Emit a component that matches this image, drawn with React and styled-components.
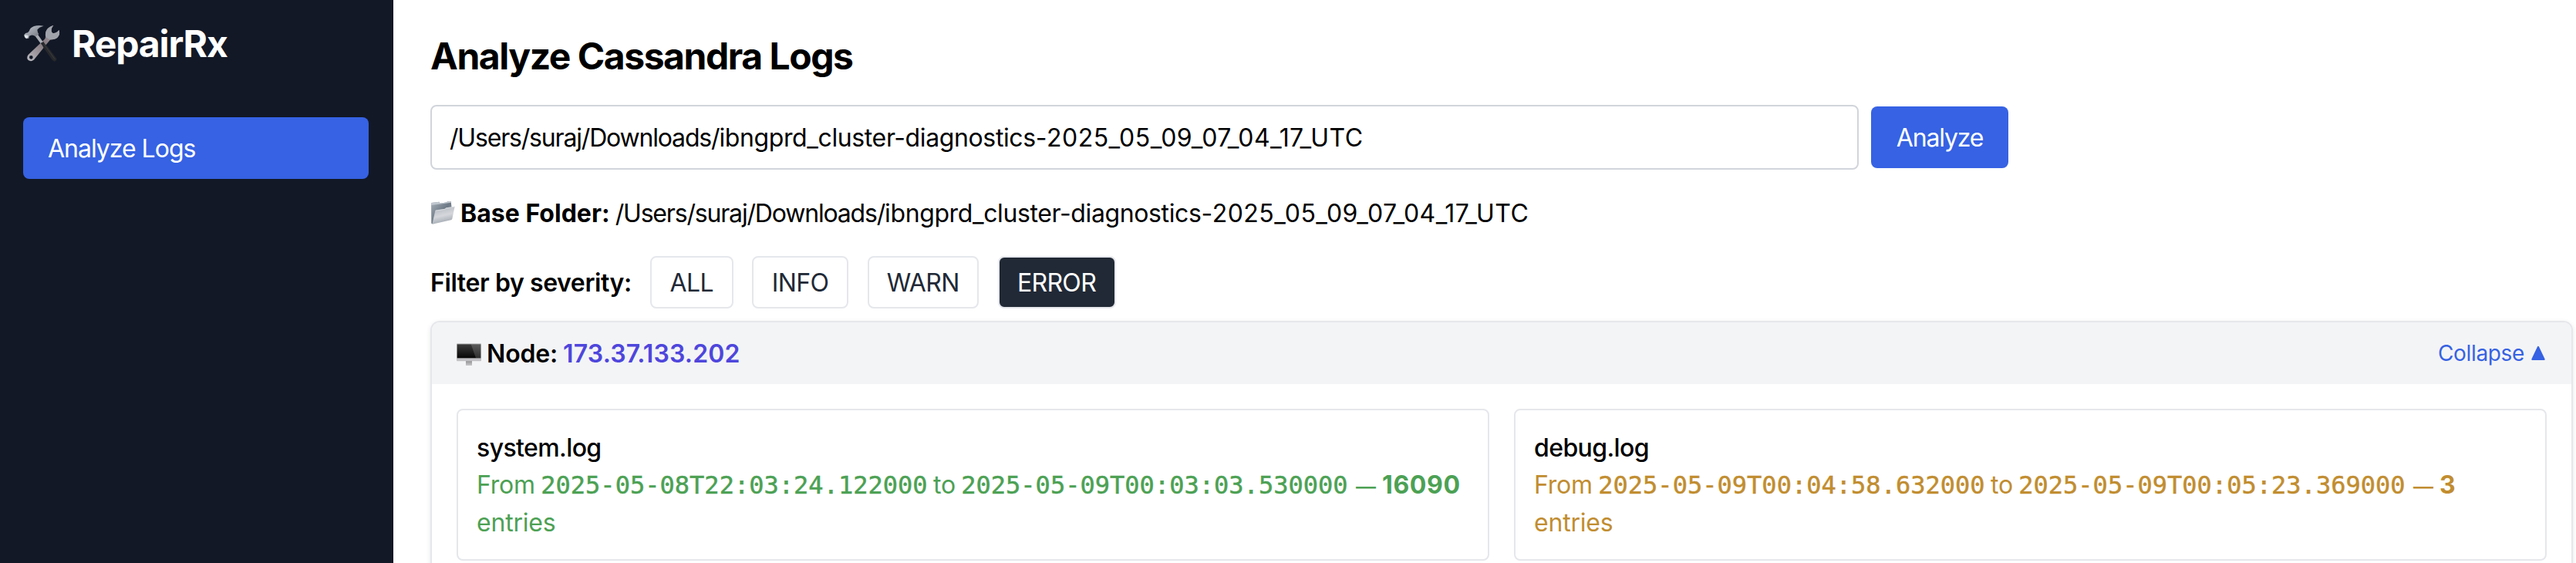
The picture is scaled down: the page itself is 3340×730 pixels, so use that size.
import React from 'react';
import styled, { createGlobalStyle } from 'styled-components';

const colors = {
  navy: '#121826',
  blue: '#3662e3',
  indigo: '#4e46dc',
  slate: '#212936',
  green: '#4ca154',
  amber: '#c18d30',
  line: '#e5e7eb',
};

const GlobalStyle = createGlobalStyle`
  * { box-sizing: border-box; }
  body {
    margin: 0;
    background: #fff;
    color: #000;
    font: 400 32px/48px Inter, sans-serif;
    overflow: hidden;
  }
  button { font: inherit; margin: 0; }
`;

const Page = styled.div`
  display: flex;
  height: 730px;
  overflow: hidden;
`;

const Sidebar = styled.aside`
  flex: none;
  width: 510px;
  padding: 24px 32px 0 30px;
  background: ${colors.navy};
  color: #fff;
`;

const Brand = styled.div`
  display: flex;
  align-items: center;
  gap: 15px;
  height: 64px;
  margin-bottom: 64px;
  font-size: 48px;
  font-weight: 700;
  letter-spacing: -1.14px;
`;

const BrandName = styled.span`
  padding-top: 2px;
`;

const NavItem = styled.a`
  display: block;
  padding: 17px 32px 15px;
  border-radius: 8px;
  background: ${colors.blue};
  letter-spacing: -1.01px;
`;

const Main = styled.main`
  flex: 1;
  min-width: 0;
  padding: 41px 4px 0 48px;
`;

const Title = styled.h1`
  margin: 0 0 31px;
  font-size: 48px;
  line-height: 64px;
  font-weight: 700;
  letter-spacing: -1.46px;
`;

const PathForm = styled.div`
  display: flex;
  align-items: center;
  gap: 16px;
  width: 2046px;
  margin-bottom: 32px;
`;

const PathInput = styled.div`
  flex: 1;
  height: 84px;
  padding: 17px 24px 15px 23px;
  border: 2px solid #d1d5db;
  border-radius: 8px;
  background: #fff;
  outline: none;
`;

const PathText = styled.span`
  letter-spacing: -1.18px;
  white-space: nowrap;
`;

const PathName = styled.span`
  letter-spacing: -0.38px;
`;

const PathStamp = styled.span`
  letter-spacing: 0.44px;
`;

const AnalyzeButton = styled.button`
  width: 178px;
  height: 80px;
  padding: 2px 0 0;
  border: 0;
  border-radius: 8px;
  background: ${colors.blue};
  color: #fff;
  letter-spacing: -1.17px;
`;

const BaseFolder = styled.div`
  display: flex;
  align-items: center;
  gap: 7px;
  height: 48px;
  margin-bottom: 32px;
`;

const FolderLine = styled.span`
  display: flex;
  gap: 7px;
  padding-top: 2px;
`;

const FolderLabel = styled.strong`
  font-weight: 700;
  letter-spacing: 0.02px;
`;

const Filters = styled.div`
  display: flex;
  align-items: center;
  gap: 24.5px;
  height: 68px;
  margin-bottom: 16px;
`;

const FilterLabel = styled.span`
  width: 260.5px;
  padding-top: 2px;
  font-weight: 600;
  letter-spacing: -0.4px;
  white-space: nowrap;
`;

const FilterButton = styled.button`
  width: ${(p) => p.$width}px;
  height: 68px;
  padding: 2px 0 0;
  border: 2px solid ${colors.line};
  border-radius: 8px;
  background: ${(p) => (p.$active ? colors.slate : '#fff')};
  color: ${(p) => (p.$active ? '#fff' : colors.slate)};
  letter-spacing: -0.65px;
`;

const NodeCard = styled.section`
  border: 2px solid ${colors.line};
  border-radius: 12px;
  box-shadow: 0 2px 6px rgba(0, 0, 0, 0.1);
  overflow: hidden;
`;

const NodeHeader = styled.header`
  display: flex;
  align-items: center;
  justify-content: space-between;
  height: 80px;
  padding: 0 32px;
  background: #f3f4f6;
`;

const NodeTitle = styled.div`
  display: flex;
  align-items: center;
  gap: 7px;
`;

const NodeName = styled.span`
  display: flex;
  gap: 7px;
  padding-top: 2px;
  font-weight: 600;
  letter-spacing: -0.16px;
`;

const NodeAddress = styled.span`
  color: ${colors.indigo};
  letter-spacing: 0.15px;
`;

const Collapse = styled.button`
  display: flex;
  align-items: center;
  gap: 8px;
  padding: 0 1px 0 0;
  border: 0;
  background: none;
  color: ${colors.blue};
  font-size: 28px;
  line-height: 40px;
  letter-spacing: -0.35px;
`;

const LogGrid = styled.div`
  display: grid;
  grid-template-columns: 1fr 1fr;
  gap: 32px;
  padding: 32px;
`;

const LogCard = styled.article`
  padding: 25px 24px 23px;
  border: 2px solid ${colors.line};
  border-radius: 8px;
`;

const LogName = styled.div`
  font-weight: 500;
  letter-spacing: -0.6px;
`;

const LogRange = styled.div`
  color: ${(p) => p.$color};
  line-height: 48.5px;
  letter-spacing: -0.2px;
  word-spacing: -1.5px;
`;

const Stamp = styled.span`
  font-family: 'DejaVu Sans Mono', monospace;
  line-height: 1;
  letter-spacing: 0.02px;
  -webkit-text-stroke: 0.5px currentColor;
`;

const Dash = styled.span`
  margin: 0 1px 0 3px;
  font-size: 26px;
  font-weight: 500;
  line-height: 1;
`;

const Count = styled.strong`
  font-weight: 700;
  letter-spacing: 0.6px;
`;

const Icon = styled.svg`
  display: block;
  flex: none;
  width: ${(p) => p.$size}px;
  height: ${(p) => p.$size}px;
`;

const ToolsIcon = () => (
  <Icon $size={48} viewBox="30 36 144 144" aria-hidden="true">
    <defs>
      <linearGradient id="steel" x1="0" y1="0" x2="1" y2="1">
        <stop offset="0" stopColor="#c3c9d2" />
        <stop offset="0.5" stopColor="#9499a2" />
        <stop offset="1" stopColor="#62656d" />
      </linearGradient>
      <linearGradient id="handle" x1="1" y1="0" x2="0" y2="1">
        <stop offset="0" stopColor="#b4b7be" />
        <stop offset="0.5" stopColor="#84777c" />
        <stop offset="1" stopColor="#b9bac0" />
      </linearGradient>
    </defs>
    <path
      d="M117 80 C115 59 127 44 148 39 C139 49 137 61 144 68 C152 71 162 67 169 57 C175 70 169 85 156 91 C147 95 139 93 134 96 L75 169 C70 178 57 180 50 174 C43 167 45 157 53 150 L113 93 Q118 88 117 80 Z M61 156 a7 7 0 1 0 0.1 14 a7 7 0 1 0 -0.1 -14 Z"
      fill="url(#handle)"
      fillRule="evenodd"
    />
    <path d="M117 80 C115 59 127 44 148 39 C139 49 137 61 144 68 C152 71 162 67 169 57 C175 70 169 85 156 91 C143 96 124 94 117 80 Z" fill="#a0a3aa" />
    <path d="M75 78 L87 74 L108 104 L99 110 Z" fill="#a9acb3" />
    <path d="M98 108 L109 102 Q114 113 124 120 L160 168 Q161 176 152 179 Q146 178 142 172 L110 127 Q107 118 98 108 Z" fill="#26282b" />
    <path d="M111 112 L153 170" stroke="#44474a" strokeWidth="2" />
    <path
      d="M34 75 Q38 68 48 67 L54 60 Q56 48 72 42 Q90 36 110 41 Q91 46 85 56 Q86 67 91 73 L78 82 Q70 76 62 77 L54 80 L52 89 L43 91 Q33 85 34 75 Z"
      fill="url(#steel)"
    />
    <path d="M35 76 L50 78 L48 87 L42 89 Q34 84 35 76 Z" fill="#e0e5eb" />
  </Icon>
);

const FolderIcon = () => (
  <Icon $size={32} viewBox="24 30 96 96" aria-hidden="true">
    <defs>
      <linearGradient id="folderBack" x1="0" y1="0" x2="1" y2="1">
        <stop offset="0" stopColor="#a7b0ba" />
        <stop offset="0.5" stopColor="#6d7985" />
        <stop offset="1" stopColor="#95a0aa" />
      </linearGradient>
      <linearGradient id="folderFront" x1="0" y1="0" x2="0.3" y2="1">
        <stop offset="0" stopColor="#adb3ba" />
        <stop offset="0.6" stopColor="#d5d7dc" />
        <stop offset="1" stopColor="#a3aab2" />
      </linearGradient>
    </defs>
    <path d="M27 39 L58 35 L62 41 L88 37 L90 34 L104 33 L107 60 L34 121 L28 119 Z" fill="url(#folderBack)" />
    <path d="M27 39 L58 35 L62 41 L88 37 L90 34 L104 33 L105 38 L28 48 Z" fill="#c0c7ce" />
    <path d="M43 70 Q44 67 48 67 L80 62 L85 58 L119 53 L109 101 Q108 105 104 106 L31 122 Z" fill="url(#folderFront)" />
    <path d="M44 70 L80 64 L86 60 L118 55" fill="none" stroke="#e4e6e9" strokeWidth="2" />
  </Icon>
);

const MonitorIcon = () => (
  <Icon $size={32} viewBox="126 36 96 96" aria-hidden="true">
    <defs>
      <linearGradient id="screen" x1="0" y1="0" x2="0" y2="1">
        <stop offset="0" stopColor="#3c3c3c" />
        <stop offset="1" stopColor="#060606" />
      </linearGradient>
      <linearGradient id="stand" x1="0" y1="0" x2="0" y2="1">
        <stop offset="0" stopColor="#929295" />
        <stop offset="1" stopColor="#c9c9cc" />
      </linearGradient>
    </defs>
    <rect x="162" y="114" width="24" height="18" fill="url(#stand)" />
    <rect x="126" y="46" width="96" height="69" rx="3" fill="#c2c1c5" />
    <rect x="128" y="49" width="92" height="54" fill="url(#screen)" />
    <path d="M182 49 H220 V103 H201 Z" fill="#fff" opacity="0.16" />
  </Icon>
);

const TriangleIcon = () => (
  <Icon $size={20} viewBox="0 0 20 20" aria-hidden="true">
    <path d="M10 2 L17.6 18 H2.4 Z" fill="currentColor" stroke="currentColor" strokeWidth="2.2" strokeLinejoin="round" />
  </Icon>
);

const FOLDER = {
  parent: '/Users/suraj/Downloads/',
  name: 'ibngprd_cluster-diagnostics-',
  stamp: '2025_05_09_07_04_17_UTC',
};

const FolderPath = () => (
  <PathText>
    {FOLDER.parent}
    <PathName>{FOLDER.name}</PathName>
    <PathStamp>{FOLDER.stamp}</PathStamp>
  </PathText>
);

const SEVERITIES = [
  { name: 'ALL', width: 107.5 },
  { name: 'INFO', width: 125 },
  { name: 'WARN', width: 144.5 },
  { name: 'ERROR', width: 153 },
];

const LOGS = [
  { name: 'system.log', from: '2025-05-08T22:03:24.122000', to: '2025-05-09T00:03:03.530000', count: 16090, color: colors.green },
  { name: 'debug.log', from: '2025-05-09T00:04:58.632000', to: '2025-05-09T00:05:23.369000', count: 3, color: colors.amber },
];

export default function App() {
  return (
    <Page>
      <GlobalStyle />
      <Sidebar>
        <Brand>
          <ToolsIcon />
          <BrandName>RepairRx</BrandName>
        </Brand>
        <NavItem>Analyze Logs</NavItem>
      </Sidebar>
      <Main>
        <Title>Analyze Cassandra Logs</Title>
        <PathForm>
          <PathInput role="textbox" tabIndex={0}>
            <FolderPath />
          </PathInput>
          <AnalyzeButton>Analyze</AnalyzeButton>
        </PathForm>
        <BaseFolder>
          <FolderIcon />
          <FolderLine>
            <FolderLabel>Base Folder:</FolderLabel>
            <FolderPath />
          </FolderLine>
        </BaseFolder>
        <Filters>
          <FilterLabel>Filter by severity:</FilterLabel>
          {SEVERITIES.map((s) => (
            <FilterButton key={s.name} $width={s.width} $active={s.name === 'ERROR'}>
              {s.name}
            </FilterButton>
          ))}
        </Filters>
        <NodeCard>
          <NodeHeader>
            <NodeTitle>
              <MonitorIcon />
              <NodeName>
                Node: <NodeAddress>173.37.133.202</NodeAddress>
              </NodeName>
            </NodeTitle>
            <Collapse>
              Collapse
              <TriangleIcon />
            </Collapse>
          </NodeHeader>
          <LogGrid>
            {LOGS.map((log) => (
              <LogCard key={log.name}>
                <LogName>{log.name}</LogName>
                <LogRange $color={log.color}>
                  From <Stamp>{log.from}</Stamp> to <Stamp>{log.to}</Stamp> <Dash>—</Dash> <Count>{log.count}</Count> entries
                </LogRange>
              </LogCard>
            ))}
          </LogGrid>
        </NodeCard>
      </Main>
    </Page>
  );
}
